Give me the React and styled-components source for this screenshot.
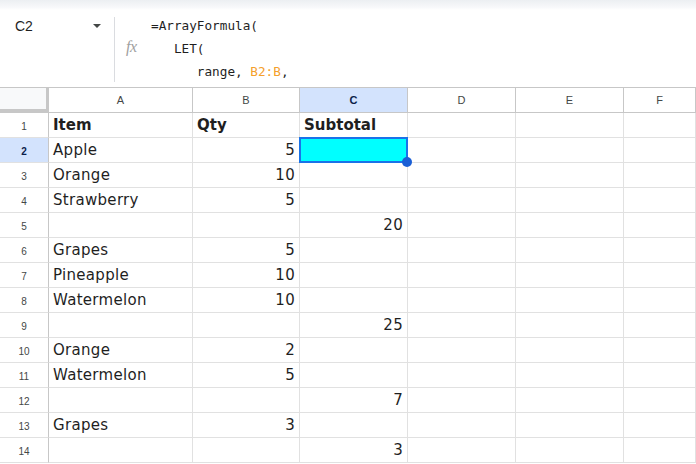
import React from "react";
import styled, { createGlobalStyle } from "styled-components";

const Global = createGlobalStyle`
  html, body { margin: 0; padding: 0; background: #fff; }
  body { width: 696px; height: 464px; overflow: hidden; }
  * { box-sizing: border-box; }
`;

const Page = styled.div`
  width: 696px;
  height: 464px;
  overflow: hidden;
  display: flex;
  flex-direction: column;
  background: #fff;
`;

const TopBand = styled.div`
  height: 10px;
  flex: none;
  background: linear-gradient(#eceff2, #f7f8fa 70%, #ffffff);
`;

const FormulaBar = styled.div`
  height: 77px;
  flex: none;
  display: flex;
  align-items: stretch;
`;

const NameBox = styled.div`
  width: 114px;
  flex: none;
  display: flex;
  align-items: flex-start;
  justify-content: space-between;
  padding: 8px 13px 0 15px;
  font-family: "Liberation Sans", Arial, sans-serif;
  font-size: 14px;
  color: #1f1f1f;
  line-height: 16px;
`;

const Caret = styled.span`
  width: 0;
  height: 0;
  margin-top: 6px;
  border-left: 4px solid transparent;
  border-right: 4px solid transparent;
  border-top: 4px solid #444746;
`;

const Divider = styled.div`
  width: 1px;
  flex: none;
  margin: 7px 0 5px;
  background: #dadce0;
`;

const FxCol = styled.div`
  width: 36px;
  flex: none;
  display: flex;
  align-items: center;
  padding-left: 11px;
  padding-bottom: 3px;
`;

const Fx = styled.span`
  font-family: "Liberation Serif", "Times New Roman", serif;
  font-style: italic;
  font-size: 16px;
  color: #a0a0a0;
  letter-spacing: -0.5px;
`;

const FormulaText = styled.div`
  display: flex;
  flex-direction: column;
  padding-top: 8px;
  font-family: "DejaVu Sans Mono", "Liberation Mono", monospace;
  font-size: 12.7px;
  color: #1f1f1f;
`;

const FLine = styled.div`
  white-space: pre;
  height: 25.5px;
  line-height: 16px;
`;

const Ref = styled.span`
  color: #f4a02b;
`;

const Grid = styled.div`
  display: grid;
  grid-template-columns: 49px 144px 107px 108px 108px 108px 72px;
  grid-auto-rows: 25px;
  grid-template-rows: 25px;
  border-top: 1px solid #c7c7c7;
`;

const Corner = styled.div`
  background: #f8f9fa;
  border-right: 4px solid #c7c7c7;
  border-bottom: 4px solid #c7c7c7;
  margin-right: -1px;
`;

const ColHead = styled.div`
  display: flex;
  align-items: center;
  justify-content: center;
  font-family: "Liberation Sans", Arial, sans-serif;
  font-size: 11px;
  color: ${(p) => (p.$active ? "#0b1e4a" : "#444746")};
  font-weight: ${(p) => (p.$active ? 700 : 400)};
  background: ${(p) => (p.$active ? "#d3e3fd" : "#ffffff")};
  border-right: 1px solid #c7c7c7;
  border-bottom: 1px solid #c7c7c7;
`;

const RowHead = styled.div`
  display: flex;
  align-items: center;
  justify-content: center;
  font-family: "Liberation Sans", Arial, sans-serif;
  font-size: 10px;
  padding-top: 2px;
  color: ${(p) => (p.$active ? "#0b1e4a" : "#444746")};
  font-weight: ${(p) => (p.$active ? 700 : 400)};
  background: ${(p) => (p.$active ? "#d3e3fd" : "#ffffff")};
  border-right: 1px solid #c7c7c7;
  border-bottom: 1px solid #e1e1e1;
`;

const Cell = styled.div`
  position: relative;
  display: flex;
  align-items: center;
  justify-content: ${(p) => (p.$num ? "flex-end" : "flex-start")};
  padding: 0 4px;
  font-family: "DejaVu Sans", Verdana, sans-serif;
  font-size: 15px;
  letter-spacing: ${(p) => (p.$bold ? "0" : "0.3px")};
  font-weight: ${(p) => (p.$bold ? 700 : 400)};
  color: #1f1f1f;
  white-space: nowrap;
  overflow: visible;
  background: ${(p) => (p.$selected ? "#00ffff" : "#ffffff")};
  border-right: 1px solid #e1e1e1;
  border-bottom: 1px solid #e1e1e1;
`;

const SelectionFrame = styled.div`
  position: absolute;
  left: -1px;
  top: -1px;
  right: -1px;
  bottom: -1px;
  border: 2px solid #1a73e8;
  z-index: 2;
  pointer-events: none;
`;

const Handle = styled.div`
  position: absolute;
  right: -5px;
  bottom: -5px;
  width: 10px;
  height: 10px;
  border-radius: 50%;
  background: #1a5fd6;
  z-index: 3;
`;

const cols = ["A", "B", "C", "D", "E", "F"];

const rows = [
  ["Item", "Qty", "Subtotal"],
  ["Apple", "5", ""],
  ["Orange", "10", ""],
  ["Strawberry", "5", ""],
  ["", "", "20"],
  ["Grapes", "5", ""],
  ["Pineapple", "10", ""],
  ["Watermelon", "10", ""],
  ["", "", "25"],
  ["Orange", "2", ""],
  ["Watermelon", "5", ""],
  ["", "", "7"],
  ["Grapes", "3", ""],
  ["", "", "3"],
];

export default function App() {
  return (
    <Page>
      <Global />
      <TopBand />
      <FormulaBar>
        <NameBox>
          <span>C2</span>
          <Caret />
        </NameBox>
        <Divider />
        <FxCol>
          <Fx>fx</Fx>
        </FxCol>
        <FormulaText>
          <FLine>=ArrayFormula(</FLine>
          <FLine>{"   LET("}</FLine>
          <FLine>
            {"      range, "}
            <Ref>B2:B</Ref>,
          </FLine>
        </FormulaText>
      </FormulaBar>
      <Grid>
        <Corner />
        {cols.map((c) => (
          <ColHead key={c} $active={c === "C"}>
            {c}
          </ColHead>
        ))}
        {rows.map((r, i) => (
          <React.Fragment key={i}>
            <RowHead $active={i === 1}>{i + 1}</RowHead>
            <Cell $bold={i === 0}>{r[0]}</Cell>
            <Cell $bold={i === 0} $num={i !== 0}>
              {r[1]}
            </Cell>
            <Cell $bold={i === 0} $num={i !== 0} $selected={i === 1}>
              {r[2]}
              {i === 1 && (
                <>
                  <SelectionFrame />
                  <Handle />
                </>
              )}
            </Cell>
            <Cell />
            <Cell />
            <Cell />
          </React.Fragment>
        ))}
      </Grid>
    </Page>
  );
}
